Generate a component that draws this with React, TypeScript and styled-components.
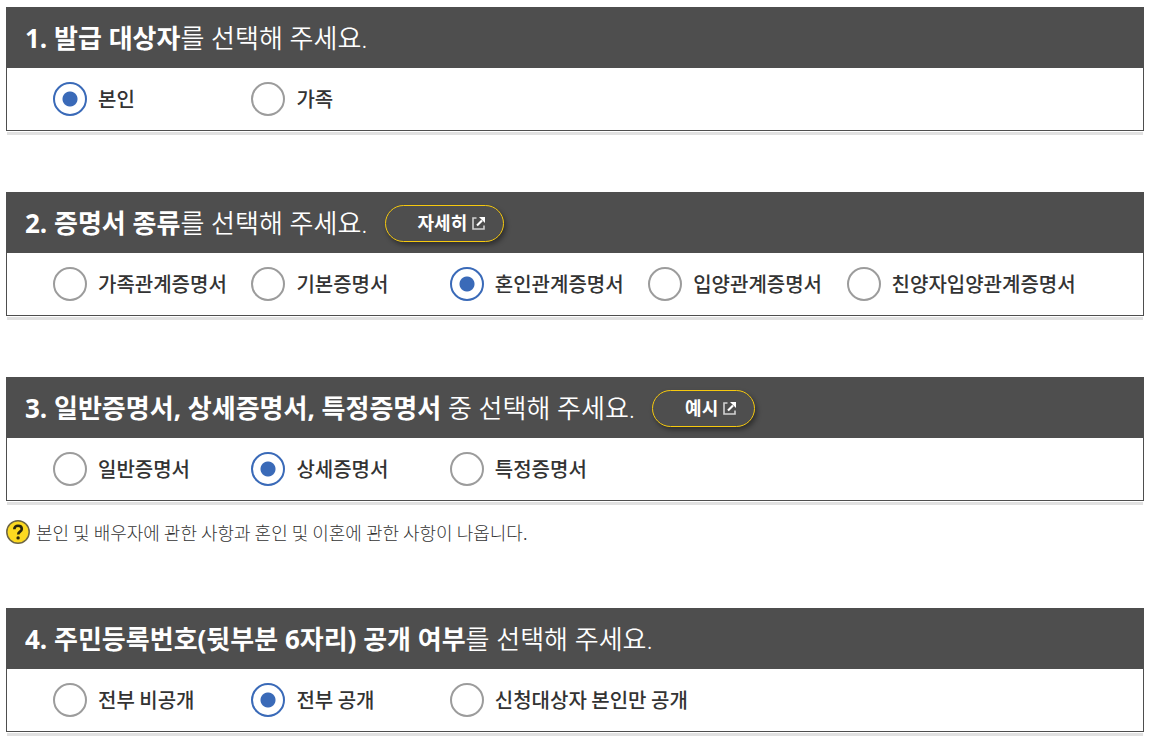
import React, { useState } from "react";
import styled, { createGlobalStyle } from "styled-components";

const GlobalStyle = createGlobalStyle`
  * { box-sizing: border-box; }
  body {
    margin: 0;
    background: #fff;
    color: #333;
    font-family: "Noto Sans CJK KR", "Liberation Sans", sans-serif;
  }
`;

const Page = styled.main`
  display: flex;
  flex-direction: column;
  gap: 61px;
  padding: 7px 18px 14px 6px;
`;

const Panel = styled.section`
  border: 1px solid #4e4e4e;
  background: #fff;
  box-shadow: 0 1px 0 0 #fff, 0 5px 0 -1px #e1e1e1;
`;

const PanelHeader = styled.header`
  display: flex;
  align-items: center;
  gap: 17px;
  min-height: 60px;
  padding: 0 18px;
  background: #4e4e4e;
  color: #fff;
  font-family: "Open Sans", "Noto Sans CJK KR", sans-serif;
`;

const Title = styled.h2`
  margin: 0;
  font-size: 26px;
  line-height: 36px;
  font-weight: 350;
`;

const Strong = styled.strong`
  font-weight: 700;
`;

const DetailButton = styled.button`
  display: flex;
  align-items: center;
  gap: 5px;
  height: 37px;
  padding: 0 18px 0 32px;
  border: 1px solid #f6c90e;
  border-radius: 19px;
  background: #4e4e4e;
  box-shadow: 2px 3px 5px rgba(0, 0, 0, 0.4);
  color: #fff;
  font-family: inherit;
  font-size: 18px;
  line-height: 24px;
  font-weight: 700;
  cursor: pointer;
`;

const Options = styled.div`
  display: grid;
  grid-template-columns: repeat(5, minmax(0, 1fr));
  padding: 14px 98px 14px 46px;
`;

const Option = styled.label`
  display: flex;
  align-items: center;
  gap: 11px;
  font-size: 20px;
  line-height: 34px;
  font-weight: 500;
  white-space: nowrap;
  cursor: pointer;
`;

const Radio = styled.input`
  flex: none;
  appearance: none;
  width: 34px;
  height: 34px;
  margin: 0;
  border: 2px solid #9c9c9c;
  border-radius: 50%;
  background: #fff;
  cursor: pointer;

  &:checked {
    border-color: #3a6ab8;
    background: radial-gradient(circle, #3a6ab8 7px, #fff 8px);
  }
`;

const NoteGroup = styled.div`
  display: flex;
  flex-direction: column;
  gap: 16px;
`;

const Note = styled.p`
  display: flex;
  align-items: center;
  gap: 6px;
  margin: 0;
  font-size: 18px;
  line-height: 30px;
  font-weight: 300;
`;

const OpenIcon = () => (
  <svg width="13" height="13" viewBox="0 0 13 13" fill="none" aria-hidden="true">
    <path d="M4.500 1H1v11h11V8.500" stroke="#d2d2d2" strokeWidth="1.600" />
    <path d="M5 8.500l5-5" stroke="#fff" strokeWidth="2.200" />
    <path d="M7 0h6v6z" fill="#fff" />
  </svg>
);

const HelpIcon = () => (
  <svg width="24" height="24" viewBox="0 0 24 24" fill="none" aria-hidden="true">
    <circle cx="12" cy="12" r="11.200" fill="#fcd920" stroke="#6d6545" strokeWidth="1.500" />
    <path
      d="M8.300 9.300C8.300 7 9.800 5.800 12 5.800s3.800 1.200 3.800 3.100c0 2.700-3.600 2.700-3.600 5.500"
      stroke="#29260f"
      strokeWidth="2.600"
    />
    <circle cx="12.100" cy="17.900" r="1.700" fill="#29260f" />
  </svg>
);

interface QuestionProps {
  id: string;
  strong: string;
  rest: string;
  detail?: string;
  options: string[];
  initial: number;
}

function Question({ id, strong, rest, detail, options, initial }: QuestionProps) {
  const [selected, setSelected] = useState(initial);
  return (
    <Panel>
      <PanelHeader>
        <Title id={`${id}-title`}>
          <Strong>{strong}</Strong>
          {rest}
        </Title>
        {detail && (
          <DetailButton type="button">
            {detail}
            <OpenIcon />
          </DetailButton>
        )}
      </PanelHeader>
      <Options role="radiogroup" aria-labelledby={`${id}-title`}>
        {options.map((label, i) => (
          <Option key={label} htmlFor={`${id}-${i}`}>
            <Radio
              type="radio"
              id={`${id}-${i}`}
              name={id}
              checked={selected === i}
              onChange={() => setSelected(i)}
            />
            {label}
          </Option>
        ))}
      </Options>
    </Panel>
  );
}

export default function App() {
  return (
    <>
      <GlobalStyle />
      <Page>
        <Question
          id="target"
          strong="1. 발급 대상자"
          rest="를 선택해 주세요."
          options={["본인", "가족"]}
          initial={0}
        />
        <Question
          id="kind"
          strong="2. 증명서 종류"
          rest="를 선택해 주세요."
          detail="자세히"
          options={["가족관계증명서", "기본증명서", "혼인관계증명서", "입양관계증명서", "친양자입양관계증명서"]}
          initial={2}
        />
        <NoteGroup>
          <Question
            id="level"
            strong="3. 일반증명서, 상세증명서, 특정증명서"
            rest=" 중 선택해 주세요."
            detail="예시"
            options={["일반증명서", "상세증명서", "특정증명서"]}
            initial={1}
          />
          <Note>
            <HelpIcon />
            본인 및 배우자에 관한 사항과 혼인 및 이혼에 관한 사항이 나옵니다.
          </Note>
        </NoteGroup>
        <Question
          id="privacy"
          strong="4. 주민등록번호(뒷부분 6자리) 공개 여부"
          rest="를 선택해 주세요."
          options={["전부 비공개", "전부 공개", "신청대상자 본인만 공개"]}
          initial={1}
        />
      </Page>
    </>
  );
}
